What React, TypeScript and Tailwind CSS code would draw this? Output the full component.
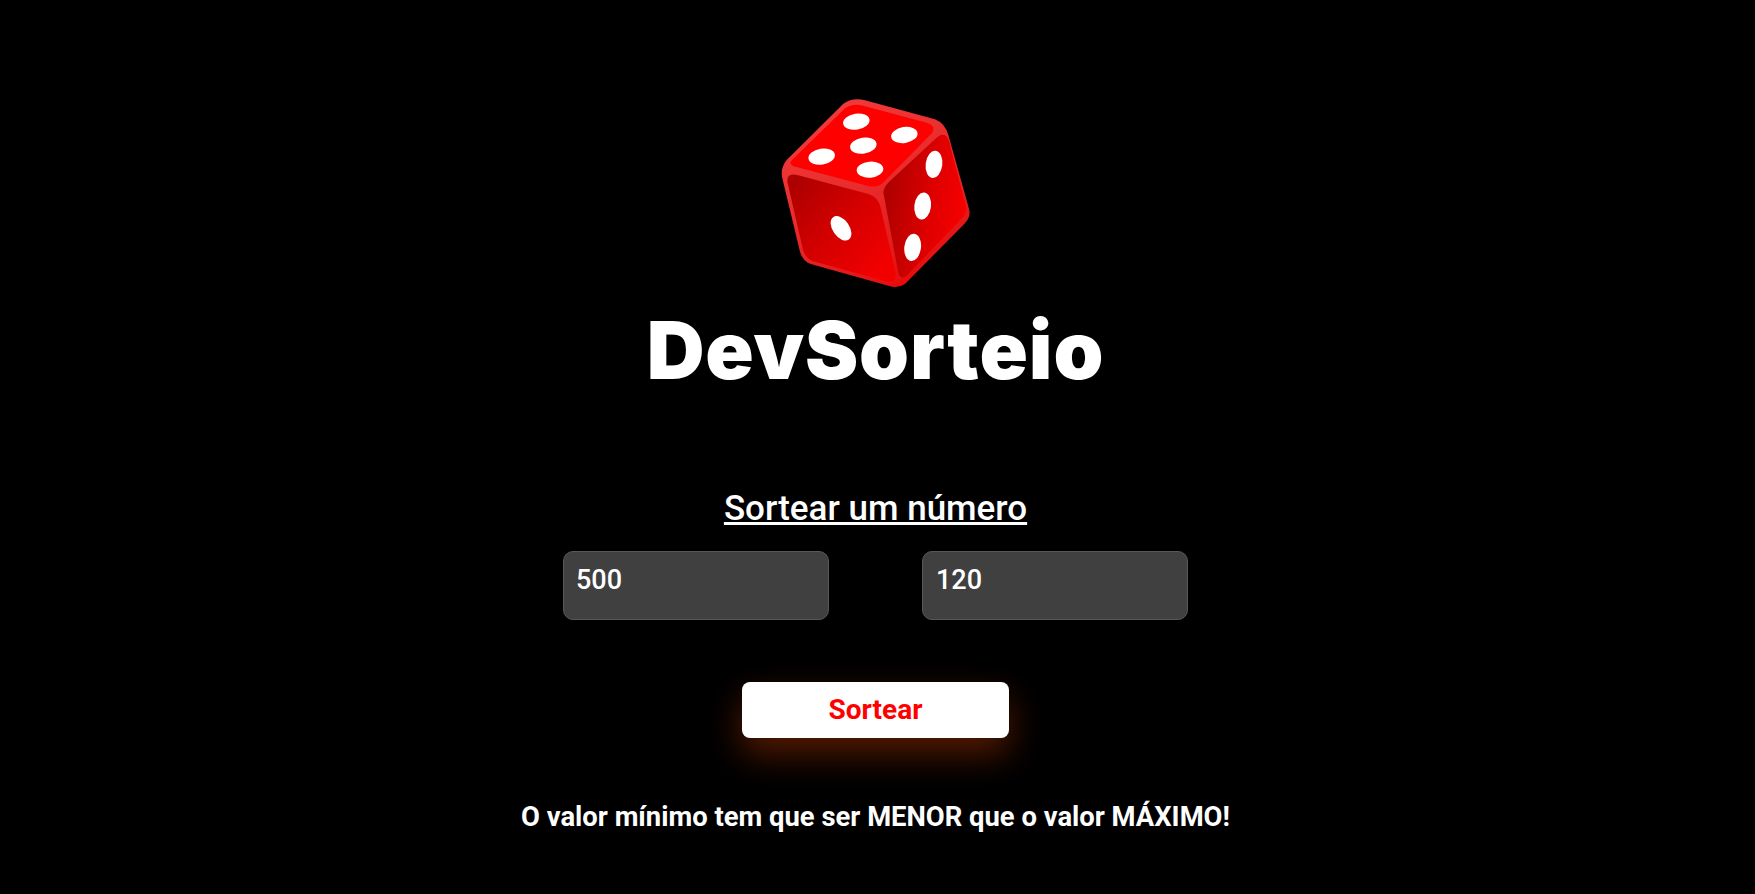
export default function App() {
  return (
    <div className="min-h-[894px] w-full bg-black text-white overflow-hidden font-['Roboto',sans-serif]">
      <main className="w-[1751px] flex flex-col items-center pt-[85px]">
        <svg className="mr-[11px] blur-[0.4px]" width="220" height="210" viewBox="0 0 660 630" aria-label="Dado vermelho">
          <defs>
            <linearGradient id="rim" x1="0.2" y1="0" x2="0.7" y2="1">
              <stop offset="0" stopColor="#f23c3c" />
              <stop offset="0.45" stopColor="#e92c2c" />
              <stop offset="0.8" stopColor="#e41a1a" />
              <stop offset="1" stopColor="#e80808" />
            </linearGradient>
            <linearGradient id="left" x1="0.05" y1="0.1" x2="0.9" y2="0.85">
              <stop offset="0" stopColor="#ad0000" />
              <stop offset="0.5" stopColor="#d40000" />
              <stop offset="1" stopColor="#f20000" />
            </linearGradient>
            <linearGradient id="right" x1="0" y1="0.35" x2="1" y2="0.6">
              <stop offset="0" stopColor="#aa0000" />
              <stop offset="0.6" stopColor="#e00000" />
              <stop offset="1" stopColor="#f80000" />
            </linearGradient>
          </defs>
          <path
            d="M250 56 Q280 36 315 46 L525 103 Q555 115 565 150 L628 375 Q632 398 612 418 L435 597 Q412 612 385 602 L155 538 Q128 530 120 500 L67 280 Q60 250 80 225 Z"
            fill="url(#rim)"
          />
          <path
            d="M255 70 Q278 54 310 62 L500 113 Q532 124 514 146 L378 284 Q355 312 322 302 L112 247 Q82 240 96 225 Z"
            fill="#ff0000"
          />
          <path
            d="M82 290 Q80 262 112 270 L325 327 Q355 336 362 368 L406 560 Q412 596 378 589 L160 529 Q136 520 129 494 Z"
            fill="url(#left)"
          />
          <path
            d="M370 322 Q372 306 386 292 L532 156 Q557 138 567 168 L618 365 Q622 385 604 402 L440 572 Q420 588 414 558 Z"
            fill="url(#right)"
          />
          <g fill="#ffffff">
            <ellipse cx="289" cy="110" rx="40" ry="24" transform="rotate(-9 289 110)" />
            <ellipse cx="433" cy="150" rx="40" ry="24" transform="rotate(-9 433 150)" />
            <ellipse cx="310" cy="182" rx="40" ry="24" transform="rotate(-9 310 182)" />
            <ellipse cx="185" cy="215" rx="40" ry="24" transform="rotate(-9 185 215)" />
            <ellipse cx="330" cy="254" rx="40" ry="24" transform="rotate(-5 330 254)" />
            <ellipse cx="522" cy="238" rx="25" ry="41" transform="rotate(7 522 238)" />
            <ellipse cx="488" cy="363" rx="25" ry="41" transform="rotate(7 488 363)" />
            <ellipse cx="458" cy="487" rx="25" ry="41" transform="rotate(7 458 487)" />
            <ellipse cx="243" cy="430" rx="25" ry="41" transform="rotate(-35 243 430)" />
          </g>
        </svg>
        <h1 className="mt-[5px] font-['Inter',sans-serif] font-black text-[80px] leading-[100px] tracking-[0.9px]">
          DevSorteio
        </h1>
        <h2 className="mt-[85px] text-[35px] leading-[48px] font-medium underline">Sortear um número</h2>
        <div className="mt-[18px] flex gap-[93px]">
          <input
            defaultValue="500"
            aria-label="Valor mínimo"
            className="w-[266px] h-[69px] pl-[12px] pb-[11px] rounded-[10px] border border-[#585858] bg-[#404040] text-[27px] font-medium text-white"
          />
          <input
            defaultValue="120"
            aria-label="Valor máximo"
            className="w-[266px] h-[69px] pl-[13px] pb-[11px] rounded-[10px] border border-[#585858] bg-[#404040] text-[27px] font-medium text-white"
          />
        </div>
        <button className="mt-[62px] w-[267px] h-[56px] rounded-[8px] bg-white text-[#ff0000] text-[28px] font-bold shadow-[0_16px_34px_rgba(255,80,0,0.33)]">
          Sortear
        </button>
        <p className="mt-[61px] text-[27.4px] leading-[36px] font-bold">
          O valor mínimo tem que ser MENOR que o valor MÁXIMO!
        </p>
      </main>
    </div>
  );
}
